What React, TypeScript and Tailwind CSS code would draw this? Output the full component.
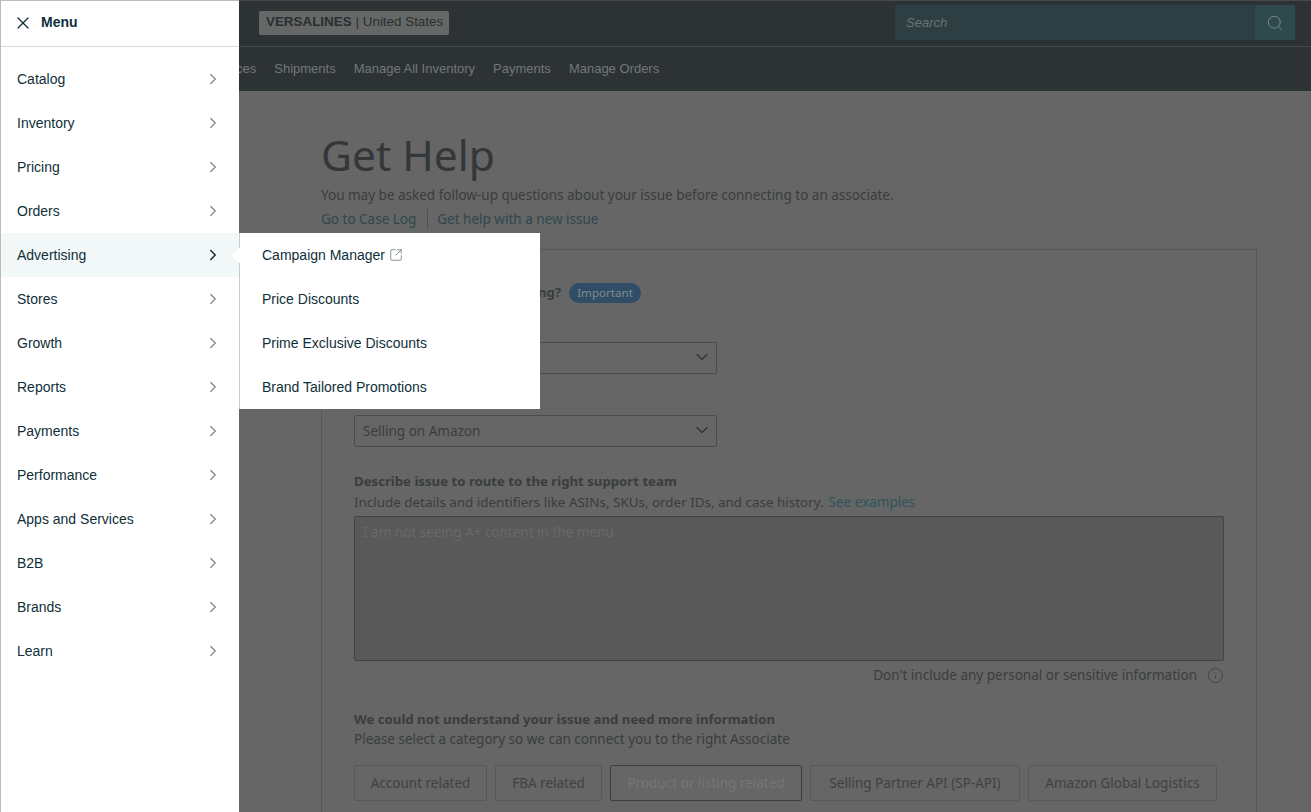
import { ChevronRight, ChevronDown, X, Search, Info, SquareArrowOutUpRight } from 'lucide-react';

const menuItems = ['Catalog', 'Inventory', 'Pricing', 'Orders', 'Advertising', 'Stores', 'Growth', 'Reports', 'Payments', 'Performance', 'Apps and Services', 'B2B', 'Brands', 'Learn'];
const subItems = ['Price Discounts', 'Prime Exclusive Discounts', 'Brand Tailored Promotions'];
const navItems = ['Shipments', 'Manage All Inventory', 'Payments', 'Manage Orders'];

function Select({ label }: { label: string }) {
    return (
        <div className="w-[363px] h-[32px] flex items-center justify-between border border-[#4a4c4d] rounded-[2px] pl-2 pr-[4px] text-[13.5px] text-[#3a3d3f]">
            <span>{label}</span>
            <ChevronDown size={20} strokeWidth={1.4} className="mb-[2px] text-[#2f3335]" />
        </div>
    );
}

function CategoryButton({ label, w, active }: { label: string; w: string; active?: boolean }) {
    return (
        <div className={`${w} h-[36px] flex items-center justify-center rounded-[2px] border ${active ? 'border-[#3c3f40] text-[#747676]' : 'border-[#575959] text-[#3f4243]'} text-[13.5px]`}>
            {label}
        </div>
    );
}

export default function App() {
    return (
        <div className="relative w-[1311px] h-[812px] overflow-hidden bg-[#656665] font-['Noto_Sans',sans-serif]">
            <div className="h-[91px] bg-[#2d3335] font-['Liberation_Sans',sans-serif]">
                <div className="h-[47px] border-t border-t-[#47494a] border-b border-b-[#454a4b] pl-[259px] pr-[16px] pb-[2px] flex items-center justify-between">
                    <div className="h-[24px] w-[190px] pl-[7px] flex items-center rounded-[2px] bg-[#666868] text-[13.4px] text-[#2a2e30]">
                        <span className="font-bold">VERSALINES</span>
                        <span className="ml-1">| United States</span>
                    </div>
                    <div className="flex w-[400px] h-[35px]">
                        <div className="flex-1 flex items-center pl-[11px] bg-[#2d3f43] text-[13px] italic text-[#6c7474]">Search</div>
                        <div className="w-[40px] flex items-center justify-center bg-[#2e4a4d] text-[#7c8586]">
                            <Search size={18} strokeWidth={1.3} />
                        </div>
                    </div>
                </div>
                <div className="h-[44px] flex items-center pl-[236px] text-[13px] text-[#727778]">
                    <span className="mr-[18px]">ces</span>
                    <div className="flex gap-[18px]">
                        {navItems.map((item) => (
                            <span key={item}>{item}</span>
                        ))}
                    </div>
                </div>
            </div>

            <div className="pl-[321px] pr-[54px] text-[#3a3d3f]">
                <h1 className="mt-[34px] h-[60px] text-[42.5px] leading-[60px] text-[#34373a]">Get Help</h1>
                <p className="text-[13.5px] leading-[20px]">You may be asked follow-up questions about your issue before connecting to an associate.</p>
                <div className="mt-[4px] flex items-center text-[13.5px] leading-[20px] text-[#2f484e]">
                    <span className="pr-[11px] border-r border-[#4d5051]">Go to Case Log</span>
                    <span className="pl-[9px]">Get help with a new issue</span>
                </div>

                <div className="mt-[20px] h-[600px] border border-[#575959] px-[32px] pt-[32px]">
                    <div className="flex items-center h-[22px] pl-[180px] text-[13.2px] font-bold">
                        <span>ing?</span>
                        <span className="ml-[8px] h-[20px] px-[8px] flex items-center rounded-full bg-[#2f4d66] text-[11.6px] font-normal text-[#7f8a90]">Important</span>
                    </div>

                    <div className="mt-[38px]">
                        <Select label="" />
                    </div>
                    <div className="mt-[41px]">
                        <Select label="Selling on Amazon" />
                    </div>

                    <p className="mt-[24px] text-[13.2px] leading-[20px] font-bold">Describe issue to route to the right support team</p>
                    <p className="mt-[1px] text-[13.42px] leading-[20px]">
                        Include details and identifiers like ASINs, SKUs, order IDs, and case history.
                        <span className="ml-[5px] text-[13.5px] text-[#2e555b]">See examples</span>
                    </p>
                    <div className="mt-[4px] h-[145px] border border-[#414445] rounded-[2px] bg-[#585958] px-2 pt-[5px] text-[13.5px] leading-[20px] text-[#686a6a]">I am not seeing A+ content in the menu</div>
                    <div className="mt-[4px] flex items-center justify-end gap-[10px] text-[13.5px] leading-[20px]">
                        <span>Don't include any personal or sensitive information</span>
                        <Info size={17} strokeWidth={1.1} />
                    </div>

                    <p className="mt-[24px] text-[13.2px] leading-[20px] font-bold">We could not understand your issue and need more information</p>
                    <p className="text-[13.5px] leading-[20px]">Please select a category so we can connect you to the right Associate</p>
                    <div className="mt-[16px] flex gap-[8px]">
                        <CategoryButton label="Account related" w="w-[133px]" />
                        <CategoryButton label="FBA related" w="w-[107px]" />
                        <CategoryButton label="Product or listing related" w="w-[192px]" active />
                        <CategoryButton label="Selling Partner API (SP-API)" w="w-[210px]" />
                        <CategoryButton label="Amazon Global Logistics" w="w-[189px]" />
                    </div>
                </div>
            </div>

            {/* drawer */}
            <div className="absolute left-0 top-0 w-[239px] h-[812px] bg-white border-l border-t border-[#bcbcbc] font-['Liberation_Sans',sans-serif] text-[14px] text-[#0f2f3a]">
                <div className="h-[46px] flex items-center pl-[12px] pb-[2px] border-b border-[#d5dbdb]">
                    <X size={20} strokeWidth={1.5} />
                    <span className="ml-[8px] font-bold">Menu</span>
                </div>
                <div className="pt-[10px]">
                    {menuItems.map((item) => (
                        <div key={item} className={`h-[44px] flex items-center justify-between pl-[16px] pr-[17px] ${item === 'Advertising' ? 'bg-[#f2f8f8]' : ''}`}>
                            <span>{item}</span>
                            <ChevronRight size={18} strokeWidth={2} className={item === 'Advertising' ? 'text-[#0f2f3a]' : 'text-[#8a9494]'} />
                        </div>
                    ))}
                </div>
            </div>

            {/* flyout */}
            <div className="absolute left-[239px] top-[233px] w-[301px] h-[176px] bg-white border-l border-[#c5cccc] font-['Liberation_Sans',sans-serif] text-[14px] text-[#0f2f3a]">
                <div className="absolute left-[-6px] top-[17px] w-[11px] h-[11px] rotate-45 bg-white"></div>
                <div className="h-[44px] flex items-center pl-[22px]">
                    Campaign Manager
                    <SquareArrowOutUpRight size={14} strokeWidth={1.25} className="ml-[4px] text-[#5f6b6e]" />
                </div>
                {subItems.map((item) => (
                    <div key={item} className="h-[44px] flex items-center pl-[22px]">{item}</div>
                ))}
            </div>
        </div>
    );
}
